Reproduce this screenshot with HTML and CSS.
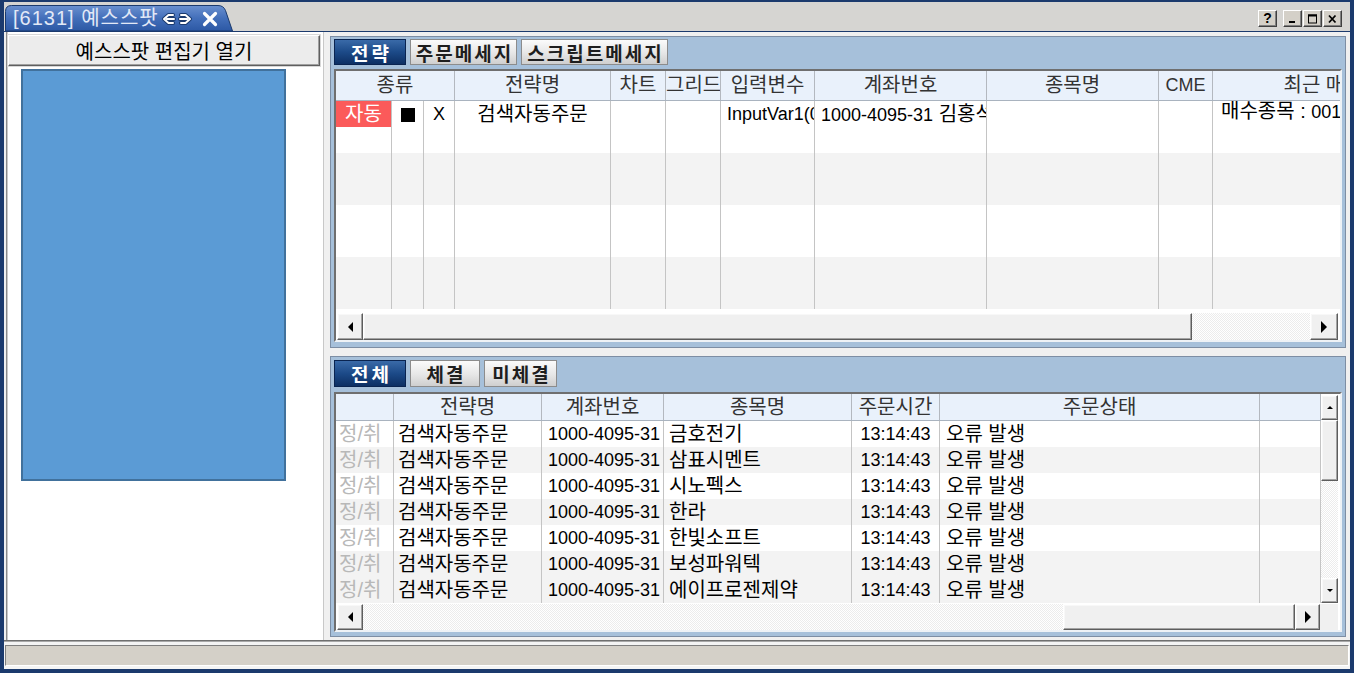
FILE: index.html
```html
<!DOCTYPE html>
<html lang="ko">
<head>
<meta charset="utf-8">
<title>예스스팟</title>
<link rel="stylesheet" href="styles.css">
</head>
<body>
<div class="window">
  <div class="titlebar">
    <div class="doc-tab">
      <svg class="tab-shape" width="228" height="26" viewBox="0 0 228 26">
        <defs>
          <linearGradient id="tg" x1="0" y1="0" x2="0" y2="1">
            <stop offset="0" stop-color="#6a90cf"/>
            <stop offset="0.5" stop-color="#436fba"/>
            <stop offset="1" stop-color="#2c58a4"/>
          </linearGradient>
        </defs>
        <path d="M0.5 26 V6.5 Q0.5 0.5 6.5 0.5 H213 Q218.5 0.5 220.5 5.5 L227.5 26 Z" fill="url(#tg)" stroke="#1b3a6d" stroke-width="1"/>
      </svg>
      <span class="doc-title">[6131] 예스스팟</span>
      <svg class="swap-icon" width="32" height="14" viewBox="0 0 32 14">
        <path d="M12 3 H7.5 L3 7 L7.5 11 H12 M6 7 H13 M20 3 H24.5 L29 7 L24.5 11 H20 M26 7 H19" fill="none" stroke="#1b3a6d" stroke-width="4" stroke-linejoin="round" stroke-linecap="round"/>
        <path d="M12 3 H7.5 L3 7 L7.5 11 H12 M6 7 H13 M20 3 H24.5 L29 7 L24.5 11 H20 M26 7 H19" fill="none" stroke="#ffffff" stroke-width="2" stroke-linejoin="round" stroke-linecap="round"/>
      </svg>
      <svg class="close-icon" width="16" height="16" viewBox="0 0 16 16">
        <path d="M2.5 2.5 L13.5 13.5 M13.5 2.5 L2.5 13.5" stroke="#ffffff" stroke-width="3.2" stroke-linecap="round"/>
      </svg>
    </div>
    <div class="win-btns">
      <span class="wbtn wbtn-help">?</span>
      <span class="wbtn"><svg width="11" height="10" viewBox="0 0 11 10"><rect x="2" y="7" width="6" height="2" fill="#000"/></svg></span>
      <span class="wbtn"><svg width="11" height="10" viewBox="0 0 11 10"><rect x="1.5" y="1" width="8" height="8" fill="none" stroke="#000" stroke-width="1"/><rect x="1" y="0.5" width="9" height="2" fill="#000"/></svg></span>
      <span class="wbtn"><svg width="11" height="10" viewBox="0 0 11 10"><path d="M2 1.5 L8.5 8.5 M8.5 1.5 L2 8.5" stroke="#000" stroke-width="1.8"/></svg></span>
    </div>
  </div>

  <div class="main">
    <div class="side">
      <button class="open-btn">예스스팟 편집기 열기</button>
      <div class="blue-box"></div>
    </div>

    <div class="right">
      <section class="panel panel-top">
        <div class="tabs">
          <span class="tab active w72">전략</span>
          <span class="tab w107">주문메세지</span>
          <span class="tab w147">스크립트메세지</span>
        </div>
        <div class="grid grid-top">
          <div class="gtable">
            <div class="row head cols-top">
              <div class="cell span3">종류</div>
              <div class="cell">전략명</div>
              <div class="cell">차트</div>
              <div class="cell">그리드</div>
              <div class="cell">입력변수</div>
              <div class="cell">계좌번호</div>
              <div class="cell">종목명</div>
              <div class="cell num">CME</div>
              <div class="cell">최근 매매시간</div>
            </div>
            <div class="row cols-top">
              <div class="cell auto">자동</div>
              <div class="cell center"><span class="sq"></span></div>
              <div class="cell center num">X</div>
              <div class="cell center">검색자동주문</div>
              <div class="cell"></div>
              <div class="cell"></div>
              <div class="cell lft num">InputVar1(0)</div>
              <div class="cell lft"><span class="num">1000-4095-31</span> 김홍석</div>
              <div class="cell"></div>
              <div class="cell"></div>
              <div class="cell lft up">매수종목 : <span class="num">001234</span></div>
            </div>
            <div class="row cols-top"><div class="cell"></div><div class="cell"></div><div class="cell"></div><div class="cell"></div><div class="cell"></div><div class="cell"></div><div class="cell"></div><div class="cell"></div><div class="cell"></div><div class="cell"></div><div class="cell"></div></div>
            <div class="row cols-top alt"><div class="cell"></div><div class="cell"></div><div class="cell"></div><div class="cell"></div><div class="cell"></div><div class="cell"></div><div class="cell"></div><div class="cell"></div><div class="cell"></div><div class="cell"></div><div class="cell"></div></div>
            <div class="row cols-top alt"><div class="cell"></div><div class="cell"></div><div class="cell"></div><div class="cell"></div><div class="cell"></div><div class="cell"></div><div class="cell"></div><div class="cell"></div><div class="cell"></div><div class="cell"></div><div class="cell"></div></div>
            <div class="row cols-top"><div class="cell"></div><div class="cell"></div><div class="cell"></div><div class="cell"></div><div class="cell"></div><div class="cell"></div><div class="cell"></div><div class="cell"></div><div class="cell"></div><div class="cell"></div><div class="cell"></div></div>
            <div class="row cols-top"><div class="cell"></div><div class="cell"></div><div class="cell"></div><div class="cell"></div><div class="cell"></div><div class="cell"></div><div class="cell"></div><div class="cell"></div><div class="cell"></div><div class="cell"></div><div class="cell"></div></div>
            <div class="row cols-top alt"><div class="cell"></div><div class="cell"></div><div class="cell"></div><div class="cell"></div><div class="cell"></div><div class="cell"></div><div class="cell"></div><div class="cell"></div><div class="cell"></div><div class="cell"></div><div class="cell"></div></div>
            <div class="row cols-top alt"><div class="cell"></div><div class="cell"></div><div class="cell"></div><div class="cell"></div><div class="cell"></div><div class="cell"></div><div class="cell"></div><div class="cell"></div><div class="cell"></div><div class="cell"></div><div class="cell"></div></div>
          </div>
          <div class="hscroll hs-top">
            <span class="sbtn sb-left"><i class="arr-l"></i></span>
            <span class="thumb th-top"></span>
            <span class="track"></span>
            <span class="sbtn sb-right"><i class="arr-r"></i></span>
          </div>
        </div>
      </section>

      <section class="panel panel-bottom">
        <div class="tabs">
          <span class="tab active w72">전체</span>
          <span class="tab w70">체결</span>
          <span class="tab w73">미체결</span>
        </div>
        <div class="grid grid-bottom">
          <div class="gb-top">
            <div class="gtable2">
              <div class="row head2 cols-bot">
                <div class="cell"></div>
                <div class="cell">전략명</div>
                <div class="cell">계좌번호</div>
                <div class="cell">종목명</div>
                <div class="cell">주문시간</div>
                <div class="cell">주문상태</div>
                <div class="cell"></div>
              </div>
              <div class="row cols-bot"><div class="cell dim">정/취</div><div class="cell name">검색자동주문</div><div class="cell acct num">1000-4095-31</div><div class="cell stock">금호전기</div><div class="cell center num">13:14:43</div><div class="cell state">오류 발생</div><div class="cell"></div></div>
              <div class="row cols-bot alt"><div class="cell dim">정/취</div><div class="cell name">검색자동주문</div><div class="cell acct num">1000-4095-31</div><div class="cell stock">삼표시멘트</div><div class="cell center num">13:14:43</div><div class="cell state">오류 발생</div><div class="cell"></div></div>
              <div class="row cols-bot"><div class="cell dim">정/취</div><div class="cell name">검색자동주문</div><div class="cell acct num">1000-4095-31</div><div class="cell stock">시노펙스</div><div class="cell center num">13:14:43</div><div class="cell state">오류 발생</div><div class="cell"></div></div>
              <div class="row cols-bot alt"><div class="cell dim">정/취</div><div class="cell name">검색자동주문</div><div class="cell acct num">1000-4095-31</div><div class="cell stock">한라</div><div class="cell center num">13:14:43</div><div class="cell state">오류 발생</div><div class="cell"></div></div>
              <div class="row cols-bot"><div class="cell dim">정/취</div><div class="cell name">검색자동주문</div><div class="cell acct num">1000-4095-31</div><div class="cell stock">한빛소프트</div><div class="cell center num">13:14:43</div><div class="cell state">오류 발생</div><div class="cell"></div></div>
              <div class="row cols-bot alt"><div class="cell dim">정/취</div><div class="cell name">검색자동주문</div><div class="cell acct num">1000-4095-31</div><div class="cell stock">보성파워텍</div><div class="cell center num">13:14:43</div><div class="cell state">오류 발생</div><div class="cell"></div></div>
              <div class="row cols-bot alt"><div class="cell dim">정/취</div><div class="cell name">검색자동주문</div><div class="cell acct num">1000-4095-31</div><div class="cell stock">에이프로젠제약</div><div class="cell center num">13:14:43</div><div class="cell state">오류 발생</div><div class="cell"></div></div>
            </div>
            <div class="vscroll">
              <span class="sbtn vb"><i class="arr-u"></i></span>
              <span class="thumb vthumb"></span>
              <span class="track"></span>
              <span class="sbtn vb"><i class="arr-d"></i></span>
            </div>
          </div>
          <div class="hscroll hs-bot">
            <span class="sbtn sb-left"><i class="arr-l"></i></span>
            <span class="track"></span>
            <span class="thumb th-bot"></span>
            <span class="sbtn sb-right2"><i class="arr-r"></i></span>
            <span class="corner"></span>
          </div>
        </div>
      </section>
    </div>
  </div>

  <div class="statusbar"><div class="status-inner"></div></div>
</div>
</body>
</html>
```

FILE: styles.css
```css
* { box-sizing: border-box; }

body {
  margin: 0;
  width: 1354px;
  height: 673px;
  overflow: hidden;
  font-family: "Liberation Sans", "Noto Sans CJK KR", sans-serif;
  font-size: 20px;
  color: #000;
  background: #1b3a6d;
}

.window {
  width: 1354px;
  height: 673px;
  border: 4px solid #1b3a6d;
  border-top-width: 2px;
  background: #f0f0f0;
  display: flex;
  flex-direction: column;
}

/* ---------- title strip ---------- */
.titlebar {
  height: 30px;
  flex: none;
  background: #d6d5d2;
  border-bottom: 1px solid #1b3a6d;
  display: flex;
  justify-content: space-between;
  align-items: flex-end;
  padding: 0 8px 0 1px;
}

.doc-tab {
  position: relative;
  width: 228px;
  height: 26px;
  display: flex;
  align-items: center;
  padding-left: 8px;
}

.tab-shape {
  position: absolute;
  left: 0;
  top: 0;
}

.doc-title {
  position: relative;
  color: #e2e9f7;
  font-size: 20px;
  letter-spacing: 1px;
  line-height: 24px;
  white-space: nowrap;
}

.swap-icon {
  position: relative;
  margin-left: 2px;
  margin-top: 2px;
}

.close-icon {
  position: relative;
  margin-left: 9px;
  margin-top: 2px;
}

.win-btns {
  display: flex;
  gap: 1px;
  margin-bottom: 4px;
}

.wbtn {
  width: 19px;
  height: 17px;
  background: #d4d0c8;
  border: 1px solid;
  border-color: #ffffff #404040 #404040 #ffffff;
  box-shadow: inset -1px -1px 0 #808080;
  display: flex;
  align-items: center;
  justify-content: center;
}

.wbtn-help {
  margin-right: 5px;
  font-family: "Liberation Sans", sans-serif;
  font-weight: bold;
  font-size: 14px;
  line-height: 13px;
}

/* ---------- main area ---------- */
.main {
  flex: 1;
  min-height: 0;
  display: flex;
  gap: 6px;
  padding: 0 4px 0 2px;
}

.side {
  width: 318px;
  background: #ffffff;
  border-left: 1px solid #8a8a8a;
  border-right: 1px solid #c8c8c8;
  box-shadow: inset 1px 0 0 #c8c8c8;
  padding-top: 3px;
}

.open-btn {
  display: block;
  margin-left: 1px;
  width: 312px;
  height: 31px;
  padding: 0;
  background: #ececec;
  border: 1px solid;
  border-color: #ffffff #5f5f5f #5f5f5f #ffffff;
  box-shadow: inset -1px -1px 0 #a0a0a0, 0 0 0 1px #d8d8d8;
  font-family: "Noto Sans CJK KR", sans-serif;
  font-size: 20px;
  line-height: 28px;
  color: #000;
}

.blue-box {
  margin: 3px 0 0 14px;
  width: 265px;
  height: 412px;
  background: #5b9bd5;
  border: 2px solid #41719c;
}

.right {
  width: 1016px;
  display: flex;
  flex-direction: column;
  gap: 8px;
  padding: 4px 0 3px;
}

/* ---------- panels ---------- */
.panel {
  border: 1px solid #7d8ea4;
  background: #a6c0da;
}

.panel-top {
  height: 312px;
  padding: 2px 3px 5px;
}

.panel-bottom {
  height: 281px;
  padding: 3px 3px 4px;
}

.tabs {
  display: flex;
  gap: 4px;
  height: 26px;
}

.panel-bottom .tabs { height: 27px; }

.tab {
  height: 100%;
  border: 1px solid #8c8c8c;
  background: linear-gradient(#fbfbfb, #e6e6e6 55%, #cfcfcf);
  color: #1e1e1e;
  font-family: "Noto Sans CJK KR", sans-serif;
  font-weight: 700;
  font-size: 19px;
  letter-spacing: 2px;
  padding-left: 2px;
  display: flex;
  align-items: center;
  justify-content: center;
  line-height: 1;
}

.tab.active {
  background: linear-gradient(#3a6aa8, #1c4a88 50%, #0d2f63);
  border-color: #0a2450;
  color: #ffffff;
  letter-spacing: 3px;
  padding-left: 3px;
}

.w72 { width: 72px; }
.w107 { width: 107px; }
.w147 { width: 147px; }
.w70 { width: 70px; }
.w73 { width: 73px; }

/* ---------- grids ---------- */
.grid {
  background: #ffffff;
  border: 2px solid;
  border-color: #6f6f6f #eef2f6 #eef2f6 #6f6f6f;
  display: flex;
  flex-direction: column;
}

.grid-top {
  margin-top: 4px;
  height: 273px;
}

.grid-bottom {
  margin-top: 5px;
  height: 240px;
}

.gtable {
  height: 242px;
  overflow: hidden;
  flex: none;
}

.row {
  display: grid;
  height: 26px;
  background: #ffffff;
}

.row.alt { background: #f3f3f3; }

.cols-top {
  width: 1135px;
  grid-template-columns: 56px 32px 31px 156px 55px 55px 94px 172px 172px 54px 258px;
}

.cols-bot {
  grid-template-columns: 58px 148px 122px 188px 88px 320px 61px;
}

.cell {
  border-right: 1px solid #c4c4c4;
  overflow: hidden;
  white-space: nowrap;
  line-height: 27px;
  font-size: 20px;
}

.num,
.cell .num { font-size: 18px; }

.row.head {
  height: 30px;
  background: #e9f1fb;
  border-bottom: 1px solid #a9b3bf;
}

.row.head .cell,
.row.head2 .cell {
  text-align: center;
  color: #333333;
  line-height: 28px;
  border-right-color: #b3b8bf;
}

.row.head2 {
  height: 27px;
  background: #e9f1fb;
  border-bottom: 1px solid #a9b3bf;
}

.row.head2 .cell { line-height: 26px; }

.span3 { grid-column: span 3; }

.auto {
  background: #fb5a5a;
  color: #ffffff;
  text-align: center;
}

.center { text-align: center; }
.cell.lft { padding-left: 6px; text-align: left; }
.cell.up { line-height: 21px; padding-left: 8px; }

.sq {
  display: inline-block;
  width: 14px;
  height: 14px;
  background: #000;
  vertical-align: -1px;
}

.cell.dim { color: #b8b8b8; padding-left: 3px; }
.cell.name { padding-left: 4px; }
.cell.acct { padding-left: 6px; }
.cell.stock { padding-left: 5px; }
.cell.state { padding-left: 6px; }

/* ---------- scrollbars ---------- */
.hscroll {
  display: flex;
  flex: none;
  padding: 0 2px 0 1px;
}

.hs-top { height: 27px; }
.hs-bot { height: 26px; }

.sbtn,
.thumb {
  background: #f0f0f0;
  border: 1px solid;
  border-color: #ffffff #5d5d5d #5d5d5d #ffffff;
  box-shadow: inset -1px -1px 0 #a3a3a3, inset 1px 1px 0 #f8f8f8;
  display: flex;
  align-items: center;
  justify-content: center;
}

.sb-left { width: 26px; }
.sb-right { width: 28px; }
.sb-right2 { width: 25px; }
.th-top { width: 829px; }
.th-bot { width: 232px; }

.track {
  flex: 1;
  background-color: #ffffff;
  background-image: repeating-conic-gradient(#ececec 0 25%, #ffffff 0 50%);
  background-size: 2px 2px;
}

.corner {
  width: 18px;
  background: #f0f0f0;
}

.arr-l, .arr-r, .arr-u, .arr-d {
  display: block;
  width: 0;
  height: 0;
}

.arr-l {
  border-top: 5px solid transparent;
  border-bottom: 5px solid transparent;
  border-right: 5px solid #000;
}

.arr-r {
  border-top: 6px solid transparent;
  border-bottom: 6px solid transparent;
  border-left: 6px solid #000;
}

.arr-u {
  border-left: 3px solid transparent;
  border-right: 3px solid transparent;
  border-bottom: 3px solid #000;
}

.arr-d {
  border-left: 3px solid transparent;
  border-right: 3px solid transparent;
  border-top: 3px solid #000;
}

.gb-top {
  display: flex;
  height: 210px;
  flex: none;
}

.gtable2 {
  width: 985px;
  overflow: hidden;
}

.vscroll {
  width: 17px;
  margin-right: 2px;
  display: flex;
  flex-direction: column;
  padding: 1px 0;
}

.vb { height: 25px; }
.vthumb { height: 61px; }

/* ---------- status bar ---------- */
.statusbar {
  height: 29px;
  flex: none;
  border-top: 1px solid #6f6f6f;
  box-shadow: inset 0 1px 0 #a8a8a8;
  padding: 4px 1px 3px 1px;
  background: #f4f4f4;
}

.status-inner {
  height: 100%;
  background: #d4d0c8;
  border: 1px solid;
  border-color: #808080 #ffffff #ffffff #808080;
}
```
